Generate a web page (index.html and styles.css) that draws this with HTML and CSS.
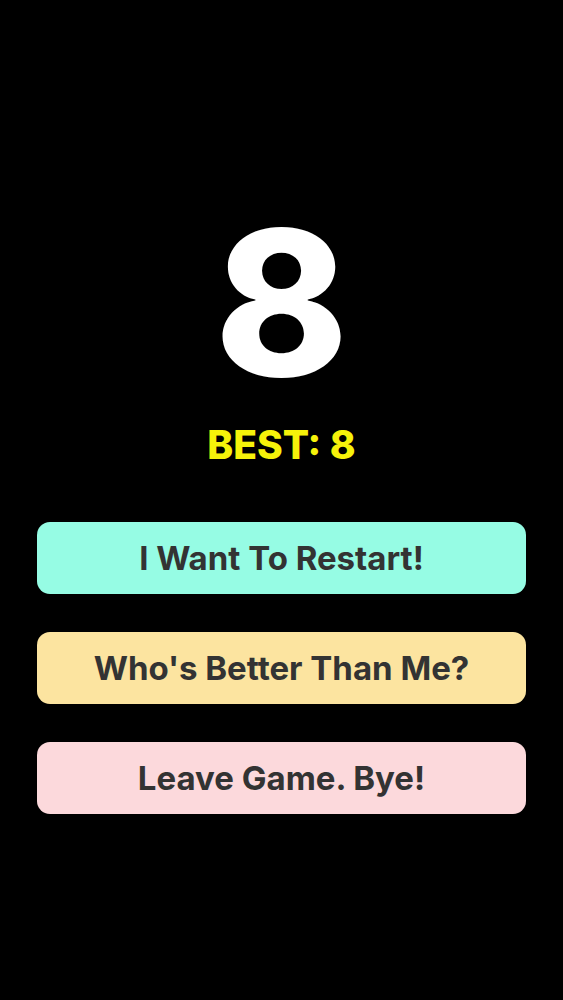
FILE: index.html
```html
<!DOCTYPE html>
<html lang="en">
<head>
    <meta charset="UTF-8">
    <meta name="viewport" content="width=device-width, initial-scale=1.0">
    <title>Game Over</title>
    <link rel="stylesheet" href="styles.css">
</head>
<body>
    <div class="screen">
        <div class="score">8</div>
        <div class="best">BEST: 8</div>
        <div class="menu">
            <button class="btn btn-restart">I Want To Restart!</button>
            <button class="btn btn-leaders">Who's Better Than Me?</button>
            <button class="btn btn-leave">Leave Game. Bye!</button>
        </div>
    </div>
</body>
</html>
```

FILE: styles.css
```css
html,
body {
    margin: 0;
    background-color: #000;
}

.screen {
    display: flex;
    flex-direction: column;
    align-items: center;
    min-height: 1000px;
    padding-top: 202px;
    box-sizing: border-box;
    font-family: "Inter", "Liberation Sans", sans-serif;
}

.score {
    color: #fff;
    font-size: 202px;
    font-weight: 800;
    line-height: 202px;
}

/* best score line */
.best {
    margin-top: 22px;
    color: #f6f20a;
    font-size: 39px;
    font-weight: 800;
    line-height: 38px;
}

.menu {
    display: flex;
    flex-direction: column;
    gap: 38px;
    width: 489px;
    margin-top: 58px;
}

.btn {
    height: 72px;
    border: none;
    border-radius: 13px;
    color: #333;
    font-family: inherit;
    font-size: 33px;
    font-weight: 700;
}

.btn-restart {
    background-color: #96fce4;
}

.btn-leaders {
    background-color: #fce4a0;
}

.btn-leave {
    background-color: #fcd9dc;
}
```
